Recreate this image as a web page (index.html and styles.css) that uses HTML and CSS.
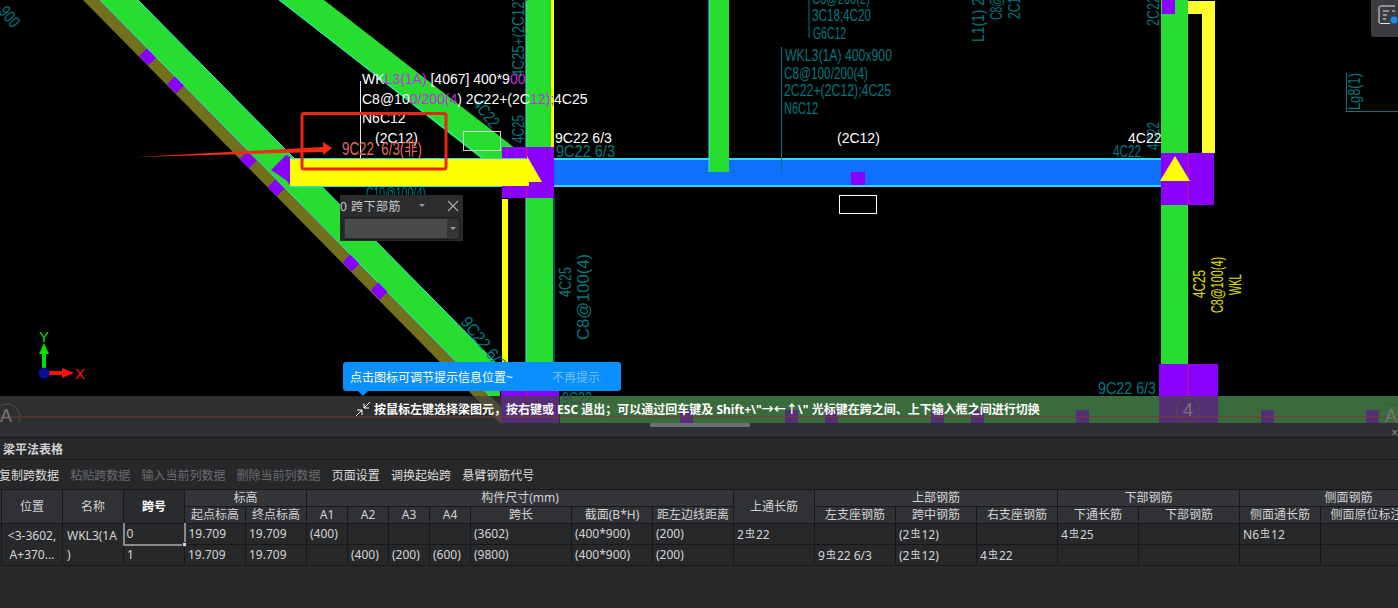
FILE: index.html
```html
<!DOCTYPE html>
<html lang="zh-CN">
<head>
<meta charset="utf-8">
<title>梁平法表格</title>
<link rel="stylesheet" href="styles.css">
</head>
<body>
<main class="app">
  <section class="stage">
    <svg class="cad" viewBox="0 0 1398 423" width="1398" height="423" xmlns="http://www.w3.org/2000/svg">
      <!-- diagonals -->
      <polygon class="olive" points="83,0 100,0 517,423 500,423"/>
      <polygon class="green" points="100,0 138,0 500,367 500,396 490,396"/>
      <line class="cy" x1="100" y1="0" x2="490" y2="396"/>
      <line class="cy" x1="138" y1="0" x2="500" y2="367"/>
      <polygon class="green" points="279,0 324,0 516,149 516,160 483,160"/>
      <line class="cy" x1="279" y1="0" x2="483" y2="158"/>
      <g class="purple">
        <rect x="-5.500" y="-6.500" width="11" height="13" transform="translate(147.500,57) rotate(-45)"/>
        <rect x="-5.500" y="-6.500" width="11" height="13" transform="translate(175.500,85) rotate(-45)"/>
        <rect x="-5.500" y="-6.500" width="11" height="13" transform="translate(248,160) rotate(-45)"/>
        <rect x="-5.500" y="-6.500" width="11" height="13" transform="translate(276,188) rotate(-45)"/>
        <rect x="-5.500" y="-6.500" width="11" height="13" transform="translate(351,263) rotate(-45)"/>
        <rect x="-5.500" y="-6.500" width="11" height="13" transform="translate(379,291) rotate(-45)"/>
        <polygon points="286,155 290,157 290,185 286,180 271,170"/>
      </g>

      <!-- bottom band under hint bar -->
      <rect class="green" x="560" y="396" width="838" height="27"/>
      <rect class="yellow" x="502" y="199" width="6" height="197"/>

      <!-- left column -->
      <rect class="green" x="526" y="0" width="27" height="396"/>
      <line class="cy" x1="526" y1="0" x2="526" y2="396"/>
      <rect class="yellow" x="551" y="0" width="3" height="147"/>
      <line class="cy2" x1="554" y1="198" x2="554" y2="396"/>
      <rect class="purple" x="501" y="391" width="58" height="32"/>
      <line class="rd" x1="527" y1="391" x2="527" y2="423"/>

      <!-- central beams -->
      <rect class="purple" x="502" y="147" width="52" height="51"/>
      <line class="rd" x1="527" y1="147" x2="527" y2="198"/>
      <rect class="blue" x="554" y="158" width="607" height="29"/>
      <rect class="cyan" x="554" y="158" width="607" height="2"/>
      <rect class="cyan" x="554" y="185" width="607" height="2"/>
      <rect class="cyan" x="290" y="158" width="236" height="1"/>
      <rect class="cyan" x="290" y="186" width="212" height="1"/>
      <polygon class="yellow" points="290,159 527,159 527,156 542,182 529,182 529,186 290,186"/>
      <rect class="green" x="709" y="0" width="20" height="172"/>
      <line class="cy" x1="709" y1="0" x2="709" y2="172"/>
      <rect class="purple" x="851" y="172" width="14" height="13"/>
      <rect class="wbox" x="839.500" y="195.500" width="37" height="18"/>
      <rect class="gbox" x="463.500" y="131.500" width="37" height="19"/>

      <!-- right column -->
      <rect class="green" x="1161" y="0" width="27" height="153"/>
      <rect class="purple" x="1162" y="0" width="13" height="14"/>
      <polygon class="yellow2" points="1188,1 1215,1 1215,153 1202,153 1202,14 1188,14"/>
      <rect class="purple" x="1161" y="153" width="53" height="52"/>
      <line class="rd" x1="1188" y1="153" x2="1188" y2="205"/>
      <polygon class="yellow" points="1175,156 1190,181 1160,181"/>
      <rect class="green" x="1161" y="205" width="27" height="159"/>
      <rect class="purple" x="1159" y="364" width="59" height="59"/>
      <line class="rd" x1="1188" y1="364" x2="1188" y2="423"/>

      <!-- small purple on lower band -->
      <g class="purple">
        <rect x="680" y="410" width="13" height="13"/>
        <rect x="785" y="410" width="13" height="13"/>
        <rect x="825" y="410" width="13" height="13"/>
        <rect x="931" y="410" width="13" height="13"/>
        <rect x="971" y="410" width="13" height="13"/>
        <rect x="1076" y="410" width="13" height="13"/>
        <rect x="1261" y="410" width="13" height="13"/>
        <rect x="1366" y="410" width="13" height="13"/>
      </g>
      <line class="axisred" x1="0" y1="417" x2="1398" y2="417"/>
      <circle class="axisring" cx="7" cy="417" r="13"/>
      <circle class="axisring" cx="1188" cy="410" r="12"/>
      <circle class="axisring" cx="1391" cy="417" r="13"/>
      <text class="axislabel" x="0" y="422">A</text>
      <text class="axislabel" x="1183" y="416">4</text>
      <text class="axislabel" x="1385" y="422">A</text>

      <!-- CAD annotation text, teal -->
      <g class="teal">
        <text transform="translate(-2,12) rotate(50)" textLength="22" lengthAdjust="spacingAndGlyphs">900</text>
        <line x1="809" y1="0" x2="809" y2="38"/>
        <text x="812" y="4" textLength="58" lengthAdjust="spacingAndGlyphs">C8@200(2)</text>
        <text x="812" y="21" textLength="59" lengthAdjust="spacingAndGlyphs">3C18;4C20</text>
        <text x="813" y="39" textLength="33" lengthAdjust="spacingAndGlyphs">G6C12</text>
        <line x1="781.500" y1="47" x2="781.500" y2="172"/>
        <text x="785" y="61" textLength="107" lengthAdjust="spacingAndGlyphs">WKL3(1A) 400x900</text>
        <text x="784" y="79" textLength="84" lengthAdjust="spacingAndGlyphs">C8@100/200(4)</text>
        <text x="784" y="96" textLength="107" lengthAdjust="spacingAndGlyphs">2C22+(2C12);4C25</text>
        <text x="784" y="114" textLength="34" lengthAdjust="spacingAndGlyphs">N6C12</text>
        <text transform="translate(984,42) rotate(-90)" textLength="44" lengthAdjust="spacingAndGlyphs">L1(1) 2</text>
        <text transform="translate(1002,20) rotate(-90)" textLength="24" lengthAdjust="spacingAndGlyphs">C8@</text>
        <text transform="translate(1020,19) rotate(-90)" textLength="22" lengthAdjust="spacingAndGlyphs">2C1</text>
        <text transform="translate(1159,26) rotate(-90)" textLength="30" lengthAdjust="spacingAndGlyphs">2C22</text>
        <text x="1113" y="157" textLength="28" lengthAdjust="spacingAndGlyphs">4C22</text>
        <text transform="translate(1159,150) rotate(-90)" textLength="28" lengthAdjust="spacingAndGlyphs">4C22</text>
        <text transform="translate(1360,110) rotate(-90)" textLength="37" lengthAdjust="spacingAndGlyphs">Lg8(1)</text>
        <line x1="1346" y1="111.500" x2="1398" y2="111.500"/>
        <line x1="1346.500" y1="73" x2="1346.500" y2="112"/>
        <text transform="translate(524,77) rotate(-90)" textLength="80" lengthAdjust="spacingAndGlyphs">4C25+(2C12)</text>
        <text transform="translate(524,143) rotate(-90)" textLength="28" lengthAdjust="spacingAndGlyphs">4C25</text>
        <text transform="translate(472,104) rotate(52)" textLength="32" lengthAdjust="spacingAndGlyphs">4C22</text>
        <text x="366" y="199" textLength="60" lengthAdjust="spacingAndGlyphs">C10@100(4)</text>
        <text x="556" y="157" textLength="59" lengthAdjust="spacingAndGlyphs">9C22 6/3</text>
        <text transform="translate(571,297) rotate(-90)" textLength="30" lengthAdjust="spacingAndGlyphs">4C25</text>
        <text transform="translate(589,340) rotate(-90)" textLength="86" lengthAdjust="spacingAndGlyphs">C8@100(4)</text>
        <text transform="translate(460,322) rotate(52)" textLength="62" lengthAdjust="spacingAndGlyphs">9C22 6/3</text>
        <text x="1098" y="394" textLength="58" lengthAdjust="spacingAndGlyphs">9C22 6/3</text>
        <text x="562" y="404" textLength="30" lengthAdjust="spacingAndGlyphs">9C22</text>
      </g>
      <g class="cadyellow">
        <text transform="translate(1205,298) rotate(-90)" textLength="28" lengthAdjust="spacingAndGlyphs">4C25</text>
        <text transform="translate(1223,313) rotate(-90)" textLength="56" lengthAdjust="spacingAndGlyphs">C8@100(4)</text>
        <text transform="translate(1241,295) rotate(-90)" textLength="21" lengthAdjust="spacingAndGlyphs">WKL</text>
      </g>

      <!-- selected beam labels -->
      <line class="wline" x1="360.500" y1="81" x2="360.500" y2="158"/>
      <text class="label" x="362" y="84">WK<tspan class="mag">L3(1A)</tspan> [4067] 400*9<tspan class="mag">00</tspan></text>
      <text class="label" x="362" y="104">C8@10<tspan class="mag">0/200(4</tspan>) 2C22+(2C<tspan class="mag">12);</tspan>4C25</text>
      <text class="label" x="362" y="123">N6C12</text>
      <text class="label" x="375" y="143">(2C12)</text>
      <text class="label" x="555" y="143">9C22 6/3</text>
      <text class="label" x="837" y="143">(2C12)</text>
      <text class="label" x="1128" y="143">4C22</text>
      <text class="pink" x="342" y="155" textLength="80" lengthAdjust="spacingAndGlyphs">9C22  6/3(非)</text>

      <!-- annotation arrow and box -->
      <polygon class="redfill" points="136,157 323,147 323,142 332,148 323,155 323,152"/>
      <rect class="redbox" x="302" y="113.500" width="144" height="55.500" rx="2"/>

      <!-- coordinate axes -->
      <rect class="ax-g" x="42" y="354" width="4" height="15"/>
      <polygon class="ax-g" points="44,343 49,354 39,354"/>
      <rect class="ax-r" x="49" y="371" width="13" height="4"/>
      <polygon class="ax-r" points="74,373 62,368 62,378"/>
      <circle class="ax-b" cx="44" cy="373" r="5.500"/>
      <text class="ax-tg" x="39" y="342">Y</text>
      <text class="ax-tr" x="75" y="379">X</text>
    </svg>

    <aside class="side-tool">
      <svg class="side-icon" viewBox="0 0 20 20" width="20" height="20" xmlns="http://www.w3.org/2000/svg">
        <path class="doc" d="M17 1H2.500Q1 1 1 2.500V17Q1 18.500 2.500 18.500H12"/>
        <path class="doc" d="M5 6h6M5 10h4M5 14h3M14 6h3"/>
        <circle class="docdot" cx="16" cy="15" r="3.500"/>
      </svg>
    </aside>

    <div class="popup">
      <div class="popup-head">
        <span class="popup-title">0 跨下部筋</span>
        <span class="popup-caret"></span>
        <svg class="popup-x" viewBox="0 0 12 12" width="12" height="12" xmlns="http://www.w3.org/2000/svg"><path d="M1 1l10 10M11 1L1 11"/></svg>
      </div>
      <div class="popup-input">
        <span class="popup-field"></span>
        <span class="popup-drop"><span class="popup-caret"></span></span>
      </div>
    </div>

    <div class="tip">
      <span>点击图标可调节提示信息位置~</span>
      <span class="tip-link">不再提示</span>
    </div>

    <div class="hint">
      <svg class="hint-icon" viewBox="0 0 16 16" width="16" height="16" xmlns="http://www.w3.org/2000/svg">
        <path d="M15 1L9 7M9 2.500V7H14M1 15l6-6M2 9h5v5"/>
      </svg>
      <span class="hint-text">按鼠标左键选择梁图元，按右键或 ESC 退出；可以通过回车键及 Shift+\"→←↑\" 光标键在跨之间、上下输入框之间进行切换</span>
    </div>
  </section>

  <div class="splitter">
    <span class="thumb"></span>
    <span class="panel-close">×</span>
  </div>

  <section class="panel">
    <h1 class="panel-title">梁平法表格</h1>
    <nav class="toolbar">
      <span>复制跨数据</span>
      <span class="off">粘贴跨数据</span>
      <span class="off">输入当前列数据</span>
      <span class="off">删除当前列数据</span>
      <span>页面设置</span>
      <span>调换起始跨</span>
      <span>悬臂钢筋代号</span>
    </nav>
    <table class="grid">
      <colgroup>
        <col class="w2"><col class="w61"><col class="w61"><col class="w61"><col class="w61"><col class="w61">
        <col class="w41"><col class="w41"><col class="w41"><col class="w41"><col class="w101"><col class="w81"><col class="w81">
        <col class="w81"><col class="w81"><col class="w81"><col class="w81"><col class="w81"><col class="w101">
        <col class="w81"><col class="w92"><col class="w45">
      </colgroup>
      <thead>
        <tr>
          <th rowspan="2"></th>
          <th rowspan="2">位置</th>
          <th rowspan="2">名称</th>
          <th rowspan="2" class="cur">跨号</th>
          <th colspan="2">标高</th>
          <th colspan="7">构件尺寸(mm)</th>
          <th rowspan="2">上通长筋</th>
          <th colspan="3">上部钢筋</th>
          <th colspan="2">下部钢筋</th>
          <th colspan="3">侧面钢筋</th>
        </tr>
        <tr>
          <th>起点标高</th><th>终点标高</th>
          <th>A1</th><th>A2</th><th>A3</th><th>A4</th>
          <th>跨长</th><th>截面(B*H)</th><th>距左边线距离</th>
          <th>左支座钢筋</th><th>跨中钢筋</th><th>右支座钢筋</th>
          <th>下通长筋</th><th>下部钢筋</th>
          <th>侧面通长筋</th><th>侧面原位标注</th><th></th>
        </tr>
      </thead>
      <tbody>
        <tr>
          <td rowspan="2"></td>
          <td rowspan="2" class="wrap">&lt;3-3602,<br>A+370...</td>
          <td rowspan="2" class="wrap left">WKL3(1A<br>)</td>
          <td class="sel">0<i class="handle"></i></td>
          <td>19.709</td><td>19.709</td>
          <td>(400)</td><td></td><td></td><td></td>
          <td>(3602)</td><td>(400*900)</td><td>(200)</td>
          <td>2<b class="rb">虫</b>22</td>
          <td></td><td>(2<b class="rb">虫</b>12)</td><td></td>
          <td>4<b class="rb">虫</b>25</td><td></td>
          <td>N6<b class="rb">虫</b>12</td><td></td><td></td>
        </tr>
        <tr>
          <td>1</td>
          <td>19.709</td><td>19.709</td>
          <td></td><td>(400)</td><td>(200)</td><td>(600)</td>
          <td>(9800)</td><td>(400*900)</td><td>(200)</td>
          <td></td>
          <td>9<b class="rb">虫</b>22 6/3</td><td>(2<b class="rb">虫</b>12)</td><td>4<b class="rb">虫</b>22</td>
          <td></td><td></td><td></td><td></td><td></td>
        </tr>
      </tbody>
    </table>
  </section>
</main>
</body>
</html>
```

FILE: styles.css
```css
* { box-sizing: border-box; }
html, body { margin: 0; padding: 0; height: 100%; overflow: hidden; background: #000; }
body { font-family: "Noto Sans", "Noto Sans CJK SC", sans-serif; font-size: 12px; }

.app { width: 1398px; height: 608px; display: flex; flex-direction: column; overflow: hidden; }

.stage { position: relative; height: 423px; flex: none; background: #000; overflow: hidden; }
.cad { display: block; }

/* canvas fills */
.olive { fill: #72701a; }
.green { fill: #27dd30; }
.purple { fill: #8a00ff; }
.blue { fill: #0f6fff; }
.cyan { fill: #33d6ff; }
.yellow { fill: #ffff00; }
.yellow2 { fill: #ffff30; }
.redfill { fill: #f42a14; }
.cy { stroke: #30e8f0; stroke-width: 1; }
.cy2 { stroke: #10a0a0; stroke-width: 1; }
.rd { stroke: #e0106a; stroke-width: 1; }
.wbox { fill: none; stroke: #fff; stroke-width: 1; }
.gbox { fill: none; stroke: #d0d0d0; stroke-width: 1; }
.redbox { fill: none; stroke: #f02414; stroke-width: 3; }
.wline { stroke: #e8e8e8; stroke-width: 1; }

.axisred { stroke: #ff2020; stroke-width: 1; }
.axisring { fill: none; stroke: #3d8f3d; stroke-width: 1; }
.axislabel { fill: #fff; font: 18px "Liberation Sans", sans-serif; }

.teal text { fill: #00787e; font: 17px "Liberation Sans", sans-serif; }
.teal line { stroke: #00787e; stroke-width: 1; }
.cadyellow text { fill: #e0e000; font: 17px "Liberation Sans", sans-serif; }
.label { fill: #fff; font: 14px "Liberation Sans", sans-serif; }
.mag { fill: #c030e0; }
.pink { fill: #e06a62; font: 18px "Liberation Sans", "Noto Sans CJK SC", sans-serif; white-space: pre; }

.ax-g { fill: #00e000; }
.ax-r { fill: #ff1010; }
.ax-b { fill: #0a0a9a; }
.ax-tg { fill: #00e000; font: 15px "Liberation Sans", sans-serif; }
.ax-tr { fill: #ff1010; font: 15px "Liberation Sans", sans-serif; }

/* right top dock */
.side-tool {
  position: absolute; top: 0; right: 0; width: 27px; height: 37px;
  background: #3a3c40; border-radius: 0 0 0 3px; padding: 5px 0 0 7px;
}
.side-icon { display: block; }
.doc { fill: none; stroke: #e4e6e8; stroke-width: 1; }
.docdot { fill: #1c8cf0; }

/* floating input */
.popup {
  position: absolute; left: 340px; top: 195px; width: 123px; height: 46px;
  background: #2b2c2e;
}
.popup-head { display: flex; align-items: center; height: 21px; color: #c8c8c8; font-size: 12px; letter-spacing: 0.5px; }
.popup-title { width: 79px; white-space: nowrap; font-size: 12px; }
.popup-caret { display: block; width: 0; height: 0; border: 3px solid transparent; border-top: 3px solid #9a9a9a; border-bottom: 0; }
.popup-x { margin-left: 22px; }
.popup-x path { fill: none; stroke: #a8a8a8; stroke-width: 1.2; }
.popup-input {
  display: flex; margin: 1px 2px 0; height: 23px; padding: 1px 2px;
  border: 1px solid #1a1b1c; border-radius: 4px;
}
.popup-field { width: 102px; background: #4a4a4a; }
.popup-drop { flex: 1; display: flex; align-items: center; justify-content: center; background: #343537; }

/* tooltip */
.tip {
  position: absolute; left: 343px; top: 362px; width: 278px; height: 29px;
  background: #0a8fff; color: #fff; border-radius: 3px; font-size: 12px;
  display: flex; align-items: center; padding-left: 7px;
}
.tip::after {
  content: ""; position: absolute; left: 15px; top: 29px;
  border: 5px solid transparent; border-top: 5px solid #0a8fff; border-bottom: 0;
}
.tip-link { margin-left: 39px; color: #74c0fb; }

/* hint bar */
.hint {
  position: absolute; left: 0; top: 396px; width: 100%; height: 27px;
  background: rgba(64, 64, 64, 0.73);
  display: flex; align-items: center; padding-left: 355px;
  color: #fff; font-weight: 700; font-size: 12px; white-space: nowrap;
}
.hint-icon { flex: none; margin-right: 3px; margin-top: -2px; }
.hint-icon path { fill: none; stroke: #fff; stroke-width: 1; }
.hint-text { margin-top: -1px; }

/* splitter */
.splitter { position: relative; height: 15px; flex: none; background: #2f3033; border-bottom: 1px solid #17181a; }
.thumb { position: absolute; left: 650px; top: 0; width: 100px; height: 4px; background: #6b7079; }
.panel-close { position: absolute; right: 0; top: 5px; color: #8a8c90; font-size: 12px; line-height: 9px; }

/* panel */
.panel { flex: 1; background: #27282a; color: #d4d5d7; overflow: hidden; }
.panel-title {
  margin: 0; height: 22px; padding-left: 3px; font-size: 12px; font-weight: 700;
  line-height: 24px; color: #d0d1d3; border-bottom: 1px solid #17181a;
}
.toolbar { display: flex; gap: 11.200px; height: 29px; align-items: center; margin-left: -1px; white-space: nowrap; color: #dcdcdc; }
.toolbar .off { color: #6a6c70; }

.grid {
  border-collapse: collapse; table-layout: fixed; width: 1458px; margin-left: -1px;
  font-size: 12px; line-height: 16px;
  border-top: 1px solid #17181a;
}
.w2 { width: 2px; } .w41 { width: 41px; } .w45 { width: 45px; } .w61 { width: 61px; }
.w81 { width: 81px; } .w92 { width: 92px; } .w101 { width: 101px; }
.grid th {
  height: 17px; padding: 0; font-weight: 400; color: #d2d3d5; background: #333538;
  border: 1px solid #17181a; text-align: center; white-space: nowrap; overflow: hidden;
}
.grid thead tr:last-child th { background: #2f3134; }
.grid th[rowspan] { background: #2f3134; }
.grid th.cur { background: #2a2b2e; color: #fff; font-weight: 700; }
.grid td {
  height: 21px; padding: 0 3px; background: #27282a; color: #d4d5d7;
  border: 1px solid #17181a; white-space: nowrap; overflow: hidden; position: relative;
}
.grid td.wrap { line-height: 19px; text-align: center; padding: 0 2px; }
.grid td.wrap.left { text-align: left; padding-left: 4px; }
.grid td.sel { border: 2px solid #8a8a8a; border-top: 1px solid #17181a; overflow: visible; padding-left: 2px; }
.handle {
  position: absolute; right: -3px; bottom: -3px; width: 5px; height: 5px;
  background: #d8d8d8; border: 1px solid #333; z-index: 2;
}
.rb { font-weight: 400; font-size: 10px; vertical-align: 2px; margin: 0 1px; }
```
